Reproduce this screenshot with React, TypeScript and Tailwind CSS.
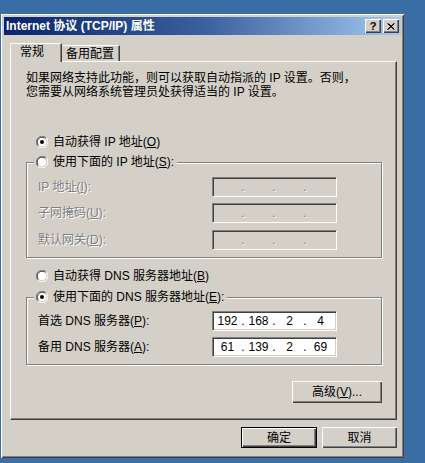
import React from "react";

const raised =
  "bg-[#d4d0c8] shadow-[inset_1px_1px_0_#fff,inset_-1px_-1px_0_#404040,inset_-2px_-2px_0_#808080]";

const Radio = ({ checked }: { checked?: boolean }) => (
  <svg width="12" height="12" viewBox="0 0 12 12" className="shrink-0">
    <circle cx="6" cy="6" r="4.5" fill="#fff" />
    <path d="M1.76 10.24 A6 6 0 0 1 10.24 1.76" stroke="#808080" strokeWidth="1" fill="none" transform="translate(0 0)" />
    <path d="M10.24 1.76 A6 6 0 0 1 1.76 10.24" stroke="#fff" strokeWidth="1" fill="none" />
    <path d="M2.47 9.53 A5 5 0 0 1 9.53 2.47" stroke="#404040" strokeWidth="1" fill="none" />
    <path d="M9.53 2.47 A5 5 0 0 1 2.47 9.53" stroke="#d4d0c8" strokeWidth="1" fill="none" />
    {checked && <circle cx="6" cy="6" r="2" fill="#000" />}
  </svg>
);

const IpBox = ({ parts, disabled }: { parts: string[]; disabled?: boolean }) => (
  <div
    className={`w-[125px] h-[20px] flex items-center pl-[1px] border border-t-[#808080] border-l-[#808080] border-b-white border-r-white shadow-[inset_1px_1px_0_#404040,inset_-1px_-1px_0_#d4d0c8] ${
      disabled ? "bg-[#d4d0c8]" : "bg-white"
    }`}
  >
    {parts.map((p, i) => (
      <React.Fragment key={i}>
        {i > 0 && (
          <span
            className={`w-[4px] text-center ${
              disabled ? "text-[#808080] [text-shadow:1px_1px_0_#fff]" : "text-black"
            }`}
          >
            .
          </span>
        )}
        <span className="w-[27px] text-center">{p}</span>
      </React.Fragment>
    ))}
  </div>
);

const FieldRow = ({
  label,
  parts,
  disabled,
}: {
  label: React.ReactNode;
  parts: string[];
  disabled?: boolean;
}) => (
  <div className="flex items-center h-[20px]">
    <span
      className={`w-[174px] whitespace-nowrap ${
        disabled ? "text-[#808080] [text-shadow:1px_1px_0_#fff]" : ""
      }`}
    >
      {label}
    </span>
    <IpBox parts={parts} disabled={disabled} />
  </div>
);

export default function App() {
  return (
    <div className="w-[425px] h-[463px] overflow-hidden bg-[#3a6ea5] pt-[14px] pl-[1px] text-[12px] leading-[14px] text-black font-['Liberation_Sans','Noto_Sans_CJK_SC',sans-serif]">
      <div className="w-[403px] h-[444px] bg-[#d4d0c8] p-[3px] flex flex-col shadow-[inset_1px_1px_0_#fff,inset_-1px_-1px_0_#404040,inset_2px_2px_0_#d4d0c8,inset_-2px_-2px_0_#808080]">
        {/* title bar */}
        <div className="h-[18px] flex items-center justify-between px-[2px] bg-linear-to-r from-[#0a246a] via-[#3a5f9e] to-[#a6caf0]">
          <span className="text-white font-bold whitespace-nowrap">Internet 协议 (TCP/IP) 属性</span>
          <div className="flex gap-[2px]">
            <button className={`w-[16px] h-[14px] flex items-center justify-center text-[11px] leading-none font-bold ${raised}`}>
              ?
            </button>
            <button className={`w-[16px] h-[14px] flex items-center justify-center ${raised}`}>
              <svg width="8" height="7" viewBox="0 0 8 7">
                <path d="M0.5 0.5 L7 6.5 M1.5 0.5 L7.5 6.5 M7 0.5 L0.5 6.5 M7.5 0.5 L1 6.5" stroke="#000" strokeWidth="1" />
              </svg>
            </button>
          </div>
        </div>

        {/* tabs */}
        <div className="flex items-end h-[18px] mt-[8px] ml-[6px]">
          <div className="relative z-10 -mb-px w-[52px] h-[19px] bg-[#d4d0c8] border-t border-l border-r border-t-white border-l-white border-r-[#404040] rounded-tl-[2px] shadow-[inset_-1px_0_0_#808080] pl-[9px] pt-[1px]">
            常规
          </div>
          <div className="w-[58px] h-[16px] border-t border-r border-t-white border-r-[#404040] shadow-[inset_-1px_0_0_#808080] pl-[4px] pt-[1px]">
            备用配置
          </div>
        </div>

        {/* panel */}
        <div className="w-[387px] h-[359px] ml-[6px] flex flex-col border border-t-white border-l-white border-r-[#404040] border-b-[#404040] shadow-[inset_-1px_-1px_0_#808080] pt-[9px] pl-[15px] pr-[14px]">
          <p className="whitespace-nowrap">
            如果网络支持此功能，则可以获取自动指派的 IP 设置。否则，
            <br />
            您需要从网络系统管理员处获得适当的 IP 设置。
          </p>

          <label className="flex items-center h-[14px] mt-[36px] pl-[10px] gap-[5px]">
            <Radio checked />
            <span>
              自动获得 IP 地址(<u>O</u>)
            </span>
          </label>

          <div className="relative mt-[13px] border border-[#808080] shadow-[inset_1px_1px_0_#fff,1px_1px_0_#fff] pt-[14px] pb-[7px] pl-[11px] flex flex-col">
            <div className="absolute -top-[8px] left-[7px] h-[14px] flex items-center gap-[5px] bg-[#d4d0c8] pl-[2px] pr-[3px]">
              <Radio />
              <span className="whitespace-nowrap">
                使用下面的 IP 地址(<u>S</u>):
              </span>
            </div>
            <FieldRow label={<>IP 地址(<u>I</u>):</>} parts={["", "", "", ""]} disabled />
            <div className="mt-[6px]">
              <FieldRow label={<>子网掩码(<u>U</u>):</>} parts={["", "", "", ""]} disabled />
            </div>
            <div className="mt-[7px]">
              <FieldRow label={<>默认网关(<u>D</u>):</>} parts={["", "", "", ""]} disabled />
            </div>
          </div>

          <label className="flex items-center h-[14px] mt-[11px] pl-[10px] gap-[5px]">
            <Radio />
            <span>
              自动获得 DNS 服务器地址(<u>B</u>)
            </span>
          </label>

          <div className="relative mt-[14px] border border-[#808080] shadow-[inset_1px_1px_0_#fff,1px_1px_0_#fff] pt-[13px] pb-[7px] pl-[11px] flex flex-col">
            <div className="absolute -top-[8px] left-[7px] h-[14px] flex items-center gap-[5px] bg-[#d4d0c8] pl-[2px] pr-[3px]">
              <Radio checked />
              <span className="whitespace-nowrap">
                使用下面的 DNS 服务器地址(<u>E</u>):
              </span>
            </div>
            <FieldRow label={<>首选 DNS 服务器(<u>P</u>):</>} parts={["192", "168", "2", "4"]} />
            <div className="mt-[6px]">
              <FieldRow label={<>备用 DNS 服务器(<u>A</u>):</>} parts={["61", "139", "2", "69"]} />
            </div>
          </div>

          <div className="flex justify-end mt-[16px]">
            <button className={`w-[90px] h-[22px] ${raised}`}>
              高级(<u>V</u>)...
            </button>
          </div>
        </div>

        {/* dialog buttons */}
        <div className="flex justify-end gap-[5px] mt-[7px] pr-[4px]">
          <button className={`w-[76px] h-[21px] border border-black ${raised}`}>确定</button>
          <button className={`w-[75px] h-[21px] ${raised}`}>取消</button>
        </div>
      </div>
    </div>
  );
}
